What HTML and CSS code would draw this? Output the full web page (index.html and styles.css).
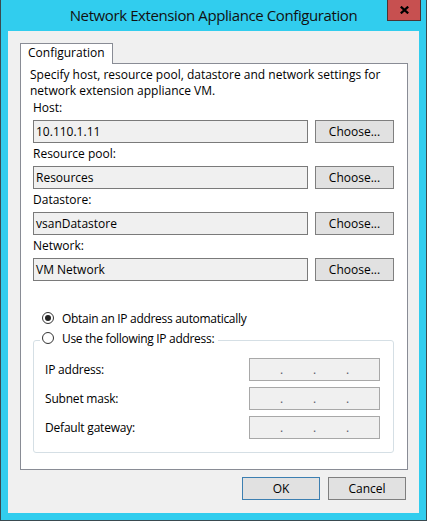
FILE: index.html
```html
<!DOCTYPE html>
<html>
<head>
<meta charset="utf-8">
<link rel="stylesheet" href="styles.css">
</head>
<body>
<div class="window">
  <div class="titlebar">
    <span class="spacer"></span>
    <div class="title">Network Extension Appliance Configuration</div>
    <div class="close-wrap">
      <div class="close">
        <svg width="9" height="8" viewBox="0 0 9 8"><path d="M0.8 0.6 L8.2 7.4 M8.2 0.6 L0.8 7.4" stroke="#000" stroke-width="2.2" fill="none"/></svg>
      </div>
    </div>
  </div>
  <div class="client">
    <div class="tabs"><div class="tab">Configuration</div></div>
    <div class="panel">
      <p class="desc">Specify host, resource pool, datastore and network settings for<br>network extension appliance VM.</p>
      <div class="field">
        <div class="label">Host:</div>
        <div class="row"><div class="input">10.110.1.11</div><button class="btn choose">Choose...</button></div>
      </div>
      <div class="field">
        <div class="label">Resource pool:</div>
        <div class="row"><div class="input">Resources</div><button class="btn choose">Choose...</button></div>
      </div>
      <div class="field">
        <div class="label">Datastore:</div>
        <div class="row"><div class="input">vsanDatastore</div><button class="btn choose">Choose...</button></div>
      </div>
      <div class="field">
        <div class="label">Network:</div>
        <div class="row"><div class="input">VM Network</div><button class="btn choose">Choose...</button></div>
      </div>
      <div class="radios">
        <label class="radio"><span class="circle checked"></span>Obtain an IP address automatically</label>
      </div>
      <fieldset class="group">
        <legend class="legend"><label class="radio"><span class="circle"></span>Use the following IP address:</label></legend>
        <div class="iprow"><span class="iplabel">IP address:</span><div class="ip"><span></span><i>.</i><span></span><i>.</i><span></span><i>.</i><span></span></div></div>
        <div class="iprow"><span class="iplabel">Subnet mask:</span><div class="ip"><span></span><i>.</i><span></span><i>.</i><span></span><i>.</i><span></span></div></div>
        <div class="iprow"><span class="iplabel">Default gateway:</span><div class="ip"><span></span><i>.</i><span></span><i>.</i><span></span><i>.</i><span></span></div></div>
      </fieldset>
    </div>
    <div class="actions">
      <button class="btn action ok">OK</button>
      <button class="btn action">Cancel</button>
    </div>
  </div>
</div>
</body>
</html>
```
FILE: styles.css
```css
* { box-sizing: border-box; }
html, body { margin: 0; padding: 0; }
body {
  width: 427px;
  height: 521px;
  font-family: "Open Sans", "Noto Sans", sans-serif;
  font-size: 12px;
  color: #000;
}
.window {
  width: 427px;
  height: 521px;
  background: #31cdee;
  border-left: 1px solid #3a4a50;
  border-right: 1px solid #3a4a50;
  border-bottom: 1px solid #3a4a50;
  display: flex;
  flex-direction: column;
}
.titlebar {
  height: 31px;
  flex: none;
  display: grid;
  grid-template-columns: 1fr auto 1fr;
  align-items: start;
}
.title {
  font-size: 15px;
  letter-spacing: -0.4px;
  line-height: 20px;
  padding-top: 5px;
  color: #111;
  white-space: nowrap;
}
.close-wrap {
  display: flex;
  justify-content: flex-end;
  padding-right: 5px;
}
.close {
  width: 34px;
  height: 21px;
  background: #c75050;
  border: 1px solid #4a3434;
  border-top: 0;
  display: flex;
  align-items: center;
  justify-content: center;
  padding-bottom: 1px;
}
.close svg { display: block; }
.client {
  flex: 1;
  margin: 0 7px 7px 7px;
  background: #f0f0f0;
  padding: 12px 11px 13px 12px;
  display: flex;
  flex-direction: column;
}
.tabs {
  height: 20px;
  display: flex;
  align-items: flex-start;
}
.tab {
  position: relative;
  z-index: 1;
  height: 21px;
  background: #fff;
  border: 1px solid #898c95;
  border-bottom: 0;
  padding: 0 7px;
  line-height: 18px;
  white-space: nowrap;
}
.panel {
  background: #fff;
  border: 1px solid #898c95;
  padding: 3px 13px 16px 12px;
}
.desc {
  margin: 0 0 1px -3px;
  line-height: 16px;
  white-space: nowrap;
}
.field + .field { margin-top: 3px; }
.label {
  line-height: 16px;
  height: 16px;
  margin-bottom: 4px;
}
.row {
  display: flex;
  gap: 7px;
}
.input {
  width: 275px;
  height: 23px;
  border: 1px solid #7a7a7a;
  background: #f0f0f0;
  padding-left: 2px;
  line-height: 21px;
}
.btn {
  font-family: inherit;
  font-size: 12px;
  color: #000;
  background: #e1e1e1;
  border: 1px solid #7f7f7f;
  border-radius: 0;
  height: 23px;
  padding: 0;
  margin: 0;
  line-height: 21px;
}
.choose { width: 79px; }
.radios {
  margin-top: 27px;
  padding-left: 9px;
}
.radio {
  display: flex;
  align-items: center;
  height: 20px;
  white-space: nowrap;
  letter-spacing: -0.3px;
}
.circle {
  width: 12px;
  height: 12px;
  border: 1px solid #333;
  border-radius: 50%;
  background: #fff;
  margin-right: 8px;
  display: flex;
  align-items: center;
  justify-content: center;
  flex: none;
}
.circle.checked::after {
  content: "";
  width: 6px;
  height: 6px;
  border-radius: 50%;
  background: #222;
}
.group {
  margin: 0;
  border: 1px solid #d5dfe5;
  border-radius: 3px;
  padding: 6px 13px 13px 6px;
  min-width: 0;
}
.legend {
  padding: 0 4px 4px 2px;
  height: 24px;
}
.iprow {
  display: flex;
  align-items: center;
  justify-content: space-between;
  padding-left: 5px;
  height: 23px;
}
.iprow + .iprow { margin-top: 6px; }
.iplabel { letter-spacing: -0.2px; }
.ip {
  width: 131px;
  height: 23px;
  border: 1px solid #a8a8a8;
  background: #f0f0f0;
  display: grid;
  grid-template-columns: 1fr 3px 1fr 3px 1fr 3px 1fr;
  line-height: 21px;
  color: #5a5a6a;
}
.ip i {
  font-style: normal;
  text-align: center;
}
.actions {
  margin-top: 7px;
  display: flex;
  justify-content: flex-end;
  gap: 8px;
  padding-right: 2px;
}
.action { width: 78px; }
.ok { border-color: #3c7fb1; }
```
